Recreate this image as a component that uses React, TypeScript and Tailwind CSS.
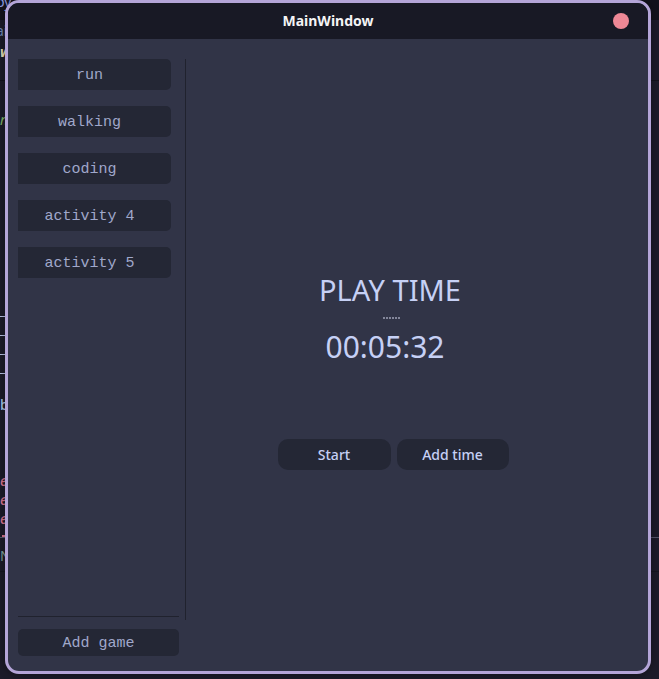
import React from "react";

const activities = ["run", "walking", "coding", "activity 4", "activity 5"];

type Fragment = { text: string; place: string };

// Ends of the editor lines that stay visible beside the window.
const fragments: Fragment[] = [
  { text: "py", place: "-top-2 -left-1 text-[#8c9be0]" },
  { text: "ai", place: "top-[21px] -left-1 text-[#6f86b8]" },
  { text: "w", place: "top-[42px] left-0 font-bold italic text-[#e6dfb8]" },
  { text: "n", place: "top-[110px] left-0 italic text-[#7fb069]" },
  { text: "b", place: "top-[395px] left-0 font-medium text-[#a9c8e8]" },
  { text: "e", place: "top-[471px] left-0 font-medium italic text-[#d9758f]" },
  { text: "e", place: "top-[490px] left-0 font-medium italic text-[#d9758f]" },
  { text: "e", place: "top-[509px] left-0 font-medium italic text-[#d9758f]" },
  { text: "N", place: "top-[546px] left-0 text-[#7f9f9c]" },
];

function Backdrop() {
  return (
    <div aria-hidden="true" className="absolute inset-0 overflow-hidden">
      <div className="absolute inset-x-0 top-0 h-5 bg-[#12121c]" />
      <div className="absolute inset-x-0 top-20 h-px bg-[#12121c]" />
      <div className="absolute inset-x-0 top-[537px] h-px bg-[#55566a]" />
      <div className="absolute inset-x-0 top-[571px] h-px bg-[#151520]" />
      <div className="absolute top-[535px] left-[2px] h-[2px] w-1 bg-[#d9758f]" />
      <div className="absolute top-[316px] left-0 flex w-2 flex-col gap-[18px]">
        <div className="h-px bg-[#b9c3e6]" />
        <div className="h-px bg-[#b9c3e6]" />
        <div className="h-px bg-[#b9c3e6]" />
        <div className="h-px bg-[#b9c3e6]" />
      </div>
      {fragments.map((f, i) => (
        <div
          key={i}
          className={`absolute font-['Noto_Sans',sans-serif] text-[14px] leading-5 ${f.place}`}
        >
          {f.text}
        </div>
      ))}
    </div>
  );
}

const mono =
  "bg-[#242735] pt-[2px] font-['Liberation_Mono',monospace] text-[15px] leading-5 text-[#a0a8cb]";
const action =
  "h-[31px] rounded-[10px] bg-[#242735] pt-[2px] text-[14px] leading-5 font-medium text-[#c6d0f5]";

export default function App() {
  return (
    <div className="relative h-screen overflow-hidden bg-[#1c1b29] pr-2 pb-[5px] pl-[5px] font-['Noto_Sans',sans-serif]">
      <Backdrop />
      <div className="relative flex h-full flex-col overflow-hidden rounded-[14px] border-[3px] border-[#b4a5d8] bg-[#313447] shadow-[0_0_8px_rgba(0,0,0,0.4)]">
        <header className="grid h-9 shrink-0 grid-cols-[1fr_auto_1fr] items-center bg-[#181925] px-[19px]">
          <h1 className="col-start-2 text-[14px] leading-5 font-bold text-[#f4f4f6]">
            MainWindow
          </h1>
          <button
            type="button"
            aria-label="Close"
            className="size-4 justify-self-end rounded-full bg-[#ee8896]"
          />
        </header>

        <div className="flex min-h-0 flex-1 pt-5 pb-[15px] pl-[10px]">
          <aside className="flex w-[161px] shrink-0 flex-col">
            <nav className="flex flex-1 flex-col gap-4 pr-2">
              {activities.map((name) => (
                <button
                  key={name}
                  type="button"
                  className={`h-[31px] shrink-0 rounded-r-[5px] pr-[10px] ${mono}`}
                >
                  {name}
                </button>
              ))}
            </nav>
            <hr className="mb-3 border-[#20222e]" />
            <button type="button" className={`h-[27px] rounded-[5px] ${mono}`}>
              Add game
            </button>
          </aside>

          <div className="mb-9 ml-[6px] w-px bg-[#20222e]" />

          <main className="flex flex-1 flex-col items-center justify-center pt-6 pr-12 text-[#c6d0f5]">
            <h2 className="pr-[6px] text-[29px] leading-10">PLAY TIME</h2>
            <div aria-hidden="true" className="mt-[7px] mb-2 flex gap-px pr-1">
              {[0, 1, 2, 3, 4, 5].map((d) => (
                <span key={d} className="size-[2px] bg-[#83869a]" />
              ))}
            </div>
            <time className="pr-4 text-[30px] leading-10">00:05:32</time>
            <div className="mt-[72px] grid grid-cols-[113px_112px] gap-[6px]">
              <button type="button" className={action}>
                Start
              </button>
              <button type="button" className={action}>
                Add time
              </button>
            </div>
          </main>
        </div>
      </div>
    </div>
  );
}
